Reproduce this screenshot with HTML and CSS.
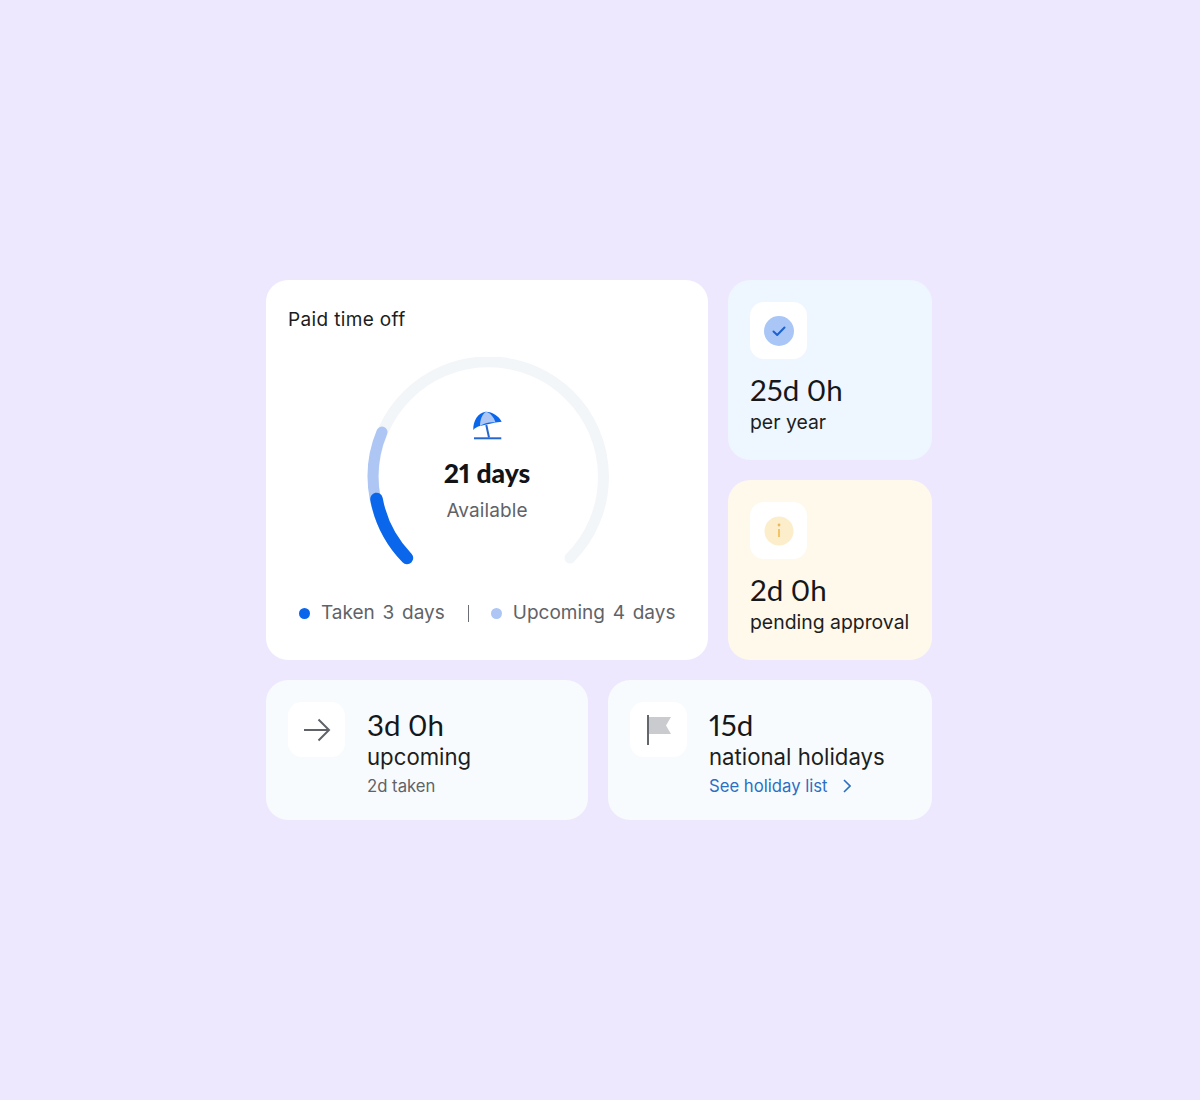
FILE: index.html
```html
<!DOCTYPE html>
<html lang="en">
<head>
<meta charset="utf-8">
<title>Paid time off</title>
<link rel="stylesheet" href="styles.css">
</head>
<body>
<main class="board">
  <div class="top-row">
    <section class="card pto">
      <h1 class="pto-title">Paid time off</h1>
      <div class="gauge">
        <svg class="gauge-arc" width="250" height="216" viewBox="0 0 250 216" fill="none">
          <path d="M44 201A115 115 0 1 1 207 201" stroke="#f3f6f9" stroke-width="11" stroke-linecap="round"/>
          <path d="M19 75A115 115 0 0 0 44 201" stroke="#adc6f3" stroke-width="11" stroke-linecap="round"/>
          <path d="M13.500 142A115 115 0 0 0 44 201" stroke="#0a66eb" stroke-width="12.500" stroke-linecap="round"/>
        </svg>
        <div class="gauge-center">
          <svg class="umbrella" width="30" height="30" viewBox="0 0 30 30" fill="none">
            <path d="M1.300 19C1 10 6 1.500 13.700 .7C20 .5 27 5 29.700 10.700L23.500 11.500L8 15C5.500 15.500 3 17 1.300 19Z" fill="#0a66eb"/>
            <path d="M8 15C8 8 11 2 14 1C18 1.500 22 6 23.500 11.500C19 10.500 12 12 8 15Z" fill="#adc6f3"/>
            <path d="M14.300 14L17 26.500" stroke="#2566cf" stroke-width="2"/>
            <path d="M2 27.300H29.300" stroke="#2566cf" stroke-width="2"/>
          </svg>
          <div class="gauge-value">21 days</div>
          <div class="gauge-label">Available</div>
        </div>
      </div>
      <div class="legend">
        <span class="legend-item"><i class="dot dot-taken"></i>Taken 3 days</span>
        <i class="legend-sep"></i>
        <span class="legend-item"><i class="dot dot-upcoming"></i>Upcoming 4 days</span>
      </div>
    </section>
    <div class="side">
      <section class="card stat stat-blue">
        <div class="tile">
          <svg width="30" height="30" viewBox="0 0 30 30" fill="none">
            <circle cx="15" cy="15" r="15" fill="#a9c6f7"/>
            <path d="M9.500 15.500L13.200 19L20.500 11.500" stroke="#1d62cf" stroke-width="2" stroke-linecap="round" stroke-linejoin="round"/>
          </svg>
        </div>
        <div class="value">25d 0h</div>
        <div class="caption">per year</div>
      </section>
      <section class="card stat stat-amber">
        <div class="tile">
          <svg width="30" height="30" viewBox="0 0 30 30" fill="none">
            <circle cx="15" cy="15" r="14.500" fill="#fdeecb"/>
            <circle cx="15" cy="9" r="1.400" fill="#e9b95a"/>
            <path d="M15 13V21" stroke="#f3c463" stroke-width="2"/>
          </svg>
        </div>
        <div class="value">2d 0h</div>
        <div class="caption">pending approval</div>
      </section>
    </div>
  </div>
  <div class="bottom-row">
    <section class="card wide wide-left">
      <div class="tile tile-row">
        <svg width="28" height="24" viewBox="0 0 28 24" fill="none">
          <path d="M1 12H26M15.500 1.500L26 12L15.500 22.500" stroke="#5f6368" stroke-width="2"/>
        </svg>
      </div>
      <div class="wide-text">
        <div class="value">3d 0h</div>
        <div class="caption">upcoming</div>
        <div class="note">2d taken</div>
      </div>
    </section>
    <section class="card wide wide-right">
      <div class="tile tile-row">
        <svg width="26" height="32" viewBox="0 0 26 32" fill="none">
          <path d="M3 3H25L20 11.500L25 20H3Z" fill="#c9cbce"/>
          <path d="M2 1V31" stroke="#63666a" stroke-width="2"/>
        </svg>
      </div>
      <div class="wide-text">
        <div class="value">15d</div>
        <div class="caption">national holidays</div>
        <a class="note link" href="#">See holiday list
          <svg width="8" height="14" viewBox="0 0 8 14" fill="none">
            <path d="M1 1L7 7L1 13" stroke="#2b6fc4" stroke-width="1.600"/>
          </svg>
        </a>
      </div>
    </section>
  </div>
</main>
</body>
</html>
```
FILE: styles.css
```css
* { box-sizing: border-box; }
html, body { margin: 0; height: 100%; }
body {
  background: #eee8fe;
  font-family: "Inter", "Liberation Sans", sans-serif;
  color: #17191c;
  padding: 280px 0 0 266px;
}
.board { width: 666px; display: flex; flex-direction: column; gap: 20px; }
.top-row, .bottom-row { display: flex; gap: 20px; }
.card { border-radius: 22px; }

.pto {
  width: 442px;
  height: 380px;
  background: #fff;
  padding: 28px 22px 0 22px;
}
.pto-title { margin: 0; font-size: 19px; letter-spacing: .35px; line-height: 24px; font-weight: 400; color: #1c1d20; }
.gauge { display: grid; justify-items: center; margin: 19px 0 0 0; }
.gauge-arc, .gauge-center { grid-area: 1 / 1; }
.gauge-arc { margin-left: 1px; margin-top: 6px; }
.gauge-center { display: flex; flex-direction: column; align-items: center; padding-top: 60px; }
.umbrella { display: block; }
.gauge-value { font-family: "Lato", sans-serif; font-feature-settings: "pnum"; font-size: 26.500px; line-height: 30px; font-weight: 900; margin-top: 17px; color: #111316; }
.gauge-label { font-size: 19px; letter-spacing: .1px; line-height: 24px; color: #5f6368; margin-top: 11px; }

.legend { display: flex; align-items: center; margin: 28px 0 0 11px; font-size: 19px; line-height: 24px; color: #5f6368; }
.legend-item { display: flex; align-items: center; white-space: nowrap; word-spacing: 2.400px; }
.dot { width: 11px; height: 11px; border-radius: 50%; margin-right: 11px; display: block; }
.dot-taken { background: #0a66eb; }
.dot-upcoming { background: #adc6f3; }
.legend-sep { display: block; width: 1px; height: 17px; background: #6b6f75; margin: 0 22px 0 23px; }

.side { width: 204px; display: flex; flex-direction: column; gap: 20px; }
.stat { height: 180px; padding: 22px; }
.stat-blue { background: #eef6ff; }
.stat-amber { background: #fff9ec; }
.tile {
  width: 57px; height: 57px; border-radius: 14px; background: #fff;
  display: flex; align-items: center; justify-content: center;
}
.value { font-family: "Lato", sans-serif; font-feature-settings: "pnum"; font-size: 29.500px; line-height: 34px; font-weight: 400; color: #15171a; }
.stat .value { margin-top: 14px; }
.caption { font-size: 19.400px; line-height: 26px; color: #1c1e22; white-space: nowrap; }
.stat .caption { margin-top: 2px; }

.wide { height: 140px; background: #f8fbfd; padding: 22px; display: flex; gap: 22px; }
.wide-left { width: 322px; }
.wide-right { width: 324px; }
.tile-row { width: 57px; height: 55px; flex: none; }
.wide-text { margin-top: 6px; }
.wide .caption { margin-top: 2px; font-size: 22.200px; }
.note { font-size: 16.700px; line-height: 22px; color: #5f6368; margin-top: 5px; display: block; }
.link { color: #2b6fc4; text-decoration: none; display: flex; align-items: center; gap: 15px; }
```
